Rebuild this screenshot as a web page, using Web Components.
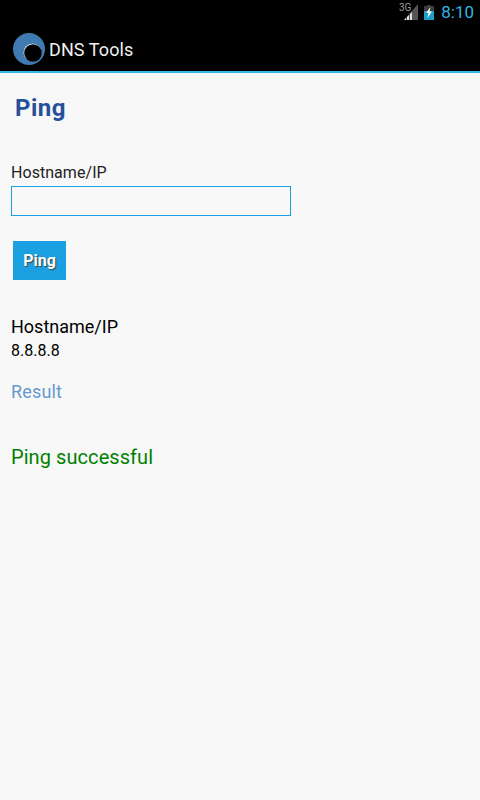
<!DOCTYPE html>
<html>
<head>
<meta charset="utf-8">
<style>
html, body { margin: 0; height: 100%; background: #f8f8f8; font-family: Roboto, sans-serif; }
body { display: flex; flex-direction: column; width: 480px; height: 800px; overflow: hidden; }
</style>
</head>
<body>
<status-bar></status-bar>
<action-bar>DNS Tools</action-bar>
<ping-screen>
  <page-title>Ping</page-title>
  <host-form label="Hostname/IP" action="Ping"></host-form>
  <result-block host="8.8.8.8" message="Ping successful"></result-block>
</ping-screen>
<script>
class StatusBar extends HTMLElement {
    constructor(){
        super()
        this.attachShadow({mode:"open"})
        this.shadowRoot.innerHTML = `
        <style>
            :host { display:flex; height:25px; background:#000; align-items:flex-start; justify-content:flex-end; color:#33b5e5; font:17px Roboto, sans-serif; }
            svg { display:block; }
            .sig { margin:0 6px 0 0; }
            .bat { margin:5px 7px 0 0; }
            .clock { margin-right:6px; line-height:25px; }
        </style>
        <svg class="sig" width="19" height="21" viewBox="0 0 19 21">
            <text x="0" y="11" font-family="Roboto, sans-serif" font-size="10" fill="#999">3G</text>
            <path d="M19 4V20H5z" fill="#555"/>
            <path d="M5 20L7 18V20zM8 20V17L10 15V20zM11 20V14L13 12V20z" fill="#e0e0e0"/>
        </svg>
        <svg class="bat" width="10" height="15" viewBox="0 0 10 15">
            <path d="M3 0H7V1H10V15H0V1H3z" fill="#1f9fc4"/>
            <path d="M0 1H3V0H7V1H10V6H0z" fill="#3c3c3c"/>
            <path d="M6.500 2L2 8H4.500L3.500 13L8 6.500H5.500z" fill="#fff"/>
        </svg>
        <span class="clock">8:10</span>`
    }
}
class ActionBar extends HTMLElement {
    constructor(){
        super()
        this.attachShadow({mode:"open"})
        this.shadowRoot.innerHTML = `
        <style>
            :host { display:flex; box-sizing:border-box; align-items:center; height:48px; background:#000; border-bottom:2px solid #33b5e5; color:#f0f0f0; font:18px Roboto, sans-serif; letter-spacing:.1px; padding:2px 0 0 13px; }
            svg { display:block; margin-right:4px; }
        </style>
        <svg width="32" height="32" viewBox="0 0 32 32">
            <circle cx="16" cy="16" r="16" fill="#3f7ab3"/>
            <circle cx="19.500" cy="19.500" r="9" fill="#dfe8f0"/>
            <circle cx="20" cy="20" r="8.800" fill="#000"/>
        </svg>
        <slot></slot>`
    }
}
class PingScreen extends HTMLElement {
    constructor(){
        super()
        this.attachShadow({mode:"open"})
        this.shadowRoot.innerHTML = `
        <style>
            :host { display:block; flex:1; padding:0 11px; }
        </style>
        <slot></slot>`
    }
}
class PageTitle extends HTMLElement {
    constructor(){
        super()
        this.attachShadow({mode:"open"})
        this.shadowRoot.innerHTML = `
        <style>
            :host { display:block; padding:19px 0 0 4px; color:#27509b; font:bold 24px/32px Roboto, sans-serif; letter-spacing:.5px; }
        </style>
        <slot></slot>`
    }
}
class HostForm extends HTMLElement {
    constructor(){
        super()
        this.attachShadow({mode:"open"})
        this.shadowRoot.innerHTML = `
        <style>
            :host { display:block; padding-top:39px; }
            label { display:block; color:#222; font:16px/20px Roboto, sans-serif; letter-spacing:.05px; }
            input { display:block; box-sizing:border-box; width:280px; height:30px; margin:3px 0 0; padding:0 4px; border:1px solid #1ba1e2; background:transparent; border-radius:0; outline:none; }
            button { display:block; width:53px; height:39px; margin:25px 0 0 2px; padding:0; border:0; background:#1ba1e2; color:#fff; font:bold 16px Roboto, sans-serif; text-shadow:1px 1px 1px #444; }
        </style>
        <label></label>
        <input type="text">
        <button></button>`
        this.shadowRoot.querySelector("label").textContent = this.getAttribute("label")
        this.shadowRoot.querySelector("button").textContent = this.getAttribute("action")
    }
}
class ResultBlock extends HTMLElement {
    constructor(){
        super()
        this.attachShadow({mode:"open"})
        this.shadowRoot.innerHTML = `
        <style>
            :host { display:block; padding-top:36px; font-family:Roboto, sans-serif; }
            .head { color:#000; font-size:18px; line-height:22px; }
            .host { color:#000; font-size:16px; line-height:24px; margin-top:1px; }
            .res { color:#6699cc; font-size:18px; line-height:24px; margin-top:17px; letter-spacing:.15px; }
            .msg { color:#008000; font-size:20px; line-height:26px; margin-top:40px; letter-spacing:.07px; }
        </style>
        <div class="head">Hostname/IP</div>
        <div class="host"></div>
        <div class="res">Result</div>
        <div class="msg"></div>`
        this.shadowRoot.querySelector(".host").textContent = this.getAttribute("host")
        this.shadowRoot.querySelector(".msg").textContent = this.getAttribute("message")
    }
}
customElements.define("status-bar", StatusBar)
customElements.define("action-bar", ActionBar)
customElements.define("ping-screen", PingScreen)
customElements.define("page-title", PageTitle)
customElements.define("host-form", HostForm)
customElements.define("result-block", ResultBlock)
</script>
</body>
</html>
